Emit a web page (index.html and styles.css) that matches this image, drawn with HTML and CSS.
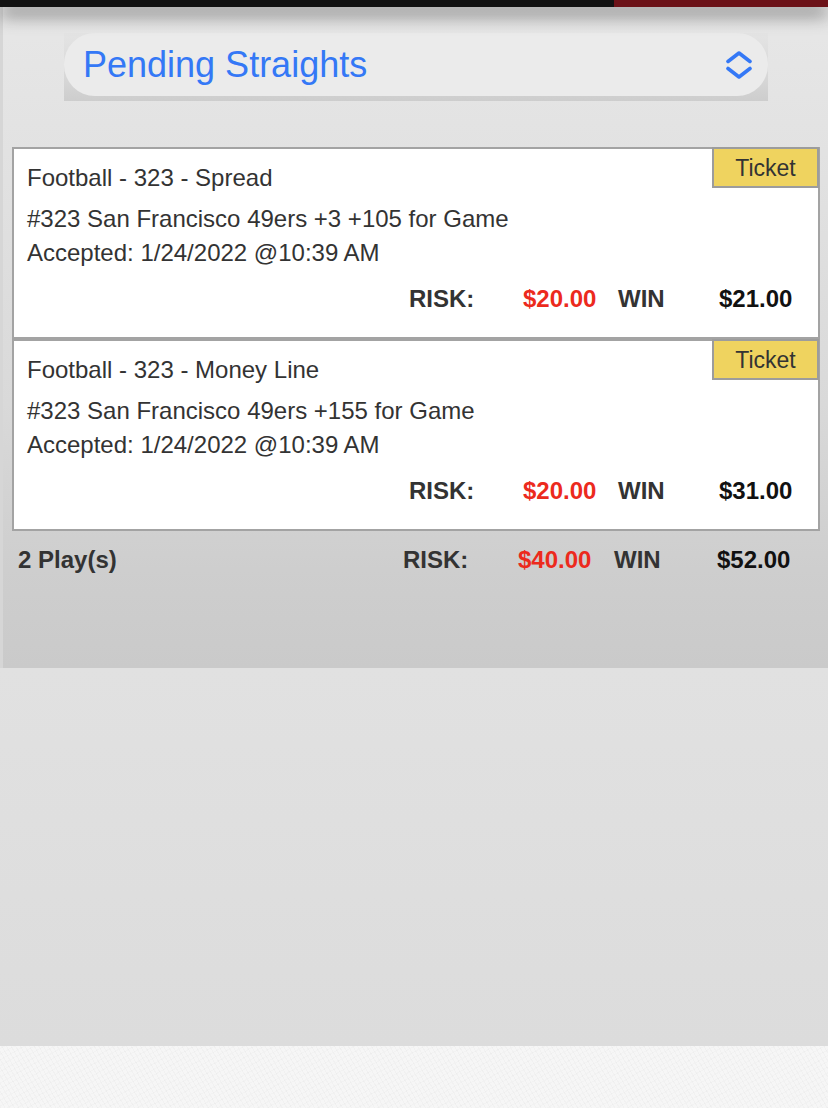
FILE: index.html
```html
<!DOCTYPE html>
<html lang="en">
<head>
<meta charset="utf-8">
<title>Pending Straights</title>
<link rel="stylesheet" href="styles.css">
</head>
<body>
<div class="topbar">
  <div class="topbar-dark"></div>
  <div class="topbar-red"></div>
</div>
<main class="panel">
  <div class="select-wrap">
    <div class="select">
      <span class="select-label">Pending Straights</span>
      <svg class="select-icon" width="26" height="28" viewBox="0 0 26 28" aria-hidden="true">
        <polyline points="2,10.5 13,2 24,10.5" fill="none" stroke="#3478f6" stroke-width="3.6" stroke-linecap="round" stroke-linejoin="round"/>
        <polyline points="2,17.5 13,26 24,17.5" fill="none" stroke="#3478f6" stroke-width="3.6" stroke-linecap="round" stroke-linejoin="round"/>
      </svg>
    </div>
  </div>

  <section class="wagers">
    <article class="wager">
      <button class="ticket">Ticket</button>
      <div class="wager-line wager-title">Football - 323 - Spread</div>
      <div class="wager-line wager-desc">#323 San Francisco 49ers +3 +105 for Game</div>
      <div class="wager-line">Accepted: 1/24/2022 @10:39 AM</div>
      <div class="wager-totals">
        <span class="lbl">RISK:</span>
        <span class="risk">$20.00</span>
        <span class="lbl">WIN</span>
        <span class="win">$21.00</span>
      </div>
    </article>
    <article class="wager">
      <button class="ticket">Ticket</button>
      <div class="wager-line wager-title">Football - 323 - Money Line</div>
      <div class="wager-line wager-desc">#323 San Francisco 49ers +155 for Game</div>
      <div class="wager-line">Accepted: 1/24/2022 @10:39 AM</div>
      <div class="wager-totals">
        <span class="lbl">RISK:</span>
        <span class="risk">$20.00</span>
        <span class="lbl">WIN</span>
        <span class="win">$31.00</span>
      </div>
    </article>
  </section>

  <div class="summary">
    <span class="plays">2 Play(s)</span>
    <span class="lbl">RISK:</span>
    <span class="risk">$40.00</span>
    <span class="lbl">WIN</span>
    <span class="win">$52.00</span>
  </div>
</main>
<div class="filler"></div>
<footer class="texture"></footer>
</body>
</html>
```
FILE: styles.css
```css
* { box-sizing: border-box; }

html, body {
  margin: 0;
  padding: 0;
}

body {
  width: 828px;
  font-family: "Liberation Sans", Arial, Helvetica, sans-serif;
  color: #333333;
  background: #dfdfdf;
}

.topbar {
  position: relative;
  z-index: 2;
  display: flex;
  height: 7px;
  box-shadow: 0 7px 18px rgba(0, 0, 0, 0.7);
}

.topbar-dark {
  width: 614px;
  background: #121212;
}

.topbar-red {
  flex: 1;
  background: #6c1218;
}

.panel {
  position: relative;
  z-index: 1;
  padding: 26px 0 91px 0;
  background: linear-gradient(to bottom, #e7e7e7 0%, #e2e2e2 22%, #d9d9d9 60%, #cecece 85%, #cacaca 100%);
  box-shadow: inset 3px 0 0 #d6d6d6;
}

.select-wrap {
  margin-left: 64px;
  width: 704px;
  padding-bottom: 5px;
  background: linear-gradient(to bottom, #e4e4e4 0%, #d6d6d6 70%, #cdcdcd 100%);
}

.select {
  display: flex;
  align-items: center;
  justify-content: space-between;
  height: 63px;
  padding: 0 16px 0 19px;
  border-radius: 31px;
  background: #ebebeb;
}

.select-label {
  font-size: 36px;
  line-height: 36px;
  color: #3478f6;
}

.select-icon {
  display: block;
}

.wagers {
  margin: 46px 8px 0 12px;
}

.wager {
  position: relative;
  height: 192px;
  padding: 12px 0 0 13px;
  background: #ffffff;
  border: 2px solid #a3a3a3;
}

.ticket {
  position: absolute;
  top: -2px;
  right: -1px;
  width: 107px;
  height: 41px;
  margin: 0;
  padding: 0;
  border: 2px solid #9c9c9c;
  background: #efd35f;
  color: #333333;
  font-family: "Liberation Sans", Arial, Helvetica, sans-serif;
  font-size: 23px;
  line-height: 39px;
  text-align: center;
}

.wager-line {
  font-size: 24px;
  line-height: 34px;
}

.wager-desc {
  margin-top: 7px;
}

.wager-totals {
  display: grid;
  grid-template-columns: 114px 95px 101px 99px;
  justify-content: end;
  margin-top: 12px;
  font-size: 24px;
  line-height: 34px;
  font-weight: bold;
}

.lbl { color: #333333; }
.risk { color: #ec2a1d; }
.win { color: #111111; }

.summary {
  display: grid;
  grid-template-columns: 1fr 115px 96px 103px 111px;
  margin-top: 12px;
  padding-left: 18px;
  font-size: 24px;
  line-height: 34px;
  font-weight: bold;
}

.filler {
  height: 378px;
  background: linear-gradient(to bottom, #e1e1e1 0%, #dcdcdc 100%);
}

.texture {
  height: 62px;
  background-color: #f6f6f6;
  background-image:
    repeating-linear-gradient(60deg, rgba(0,0,0,0.018) 0px, rgba(0,0,0,0.018) 1px, transparent 1px, transparent 4px),
    repeating-linear-gradient(-30deg, rgba(0,0,0,0.015) 0px, rgba(0,0,0,0.015) 1px, transparent 1px, transparent 5px);
}
```
